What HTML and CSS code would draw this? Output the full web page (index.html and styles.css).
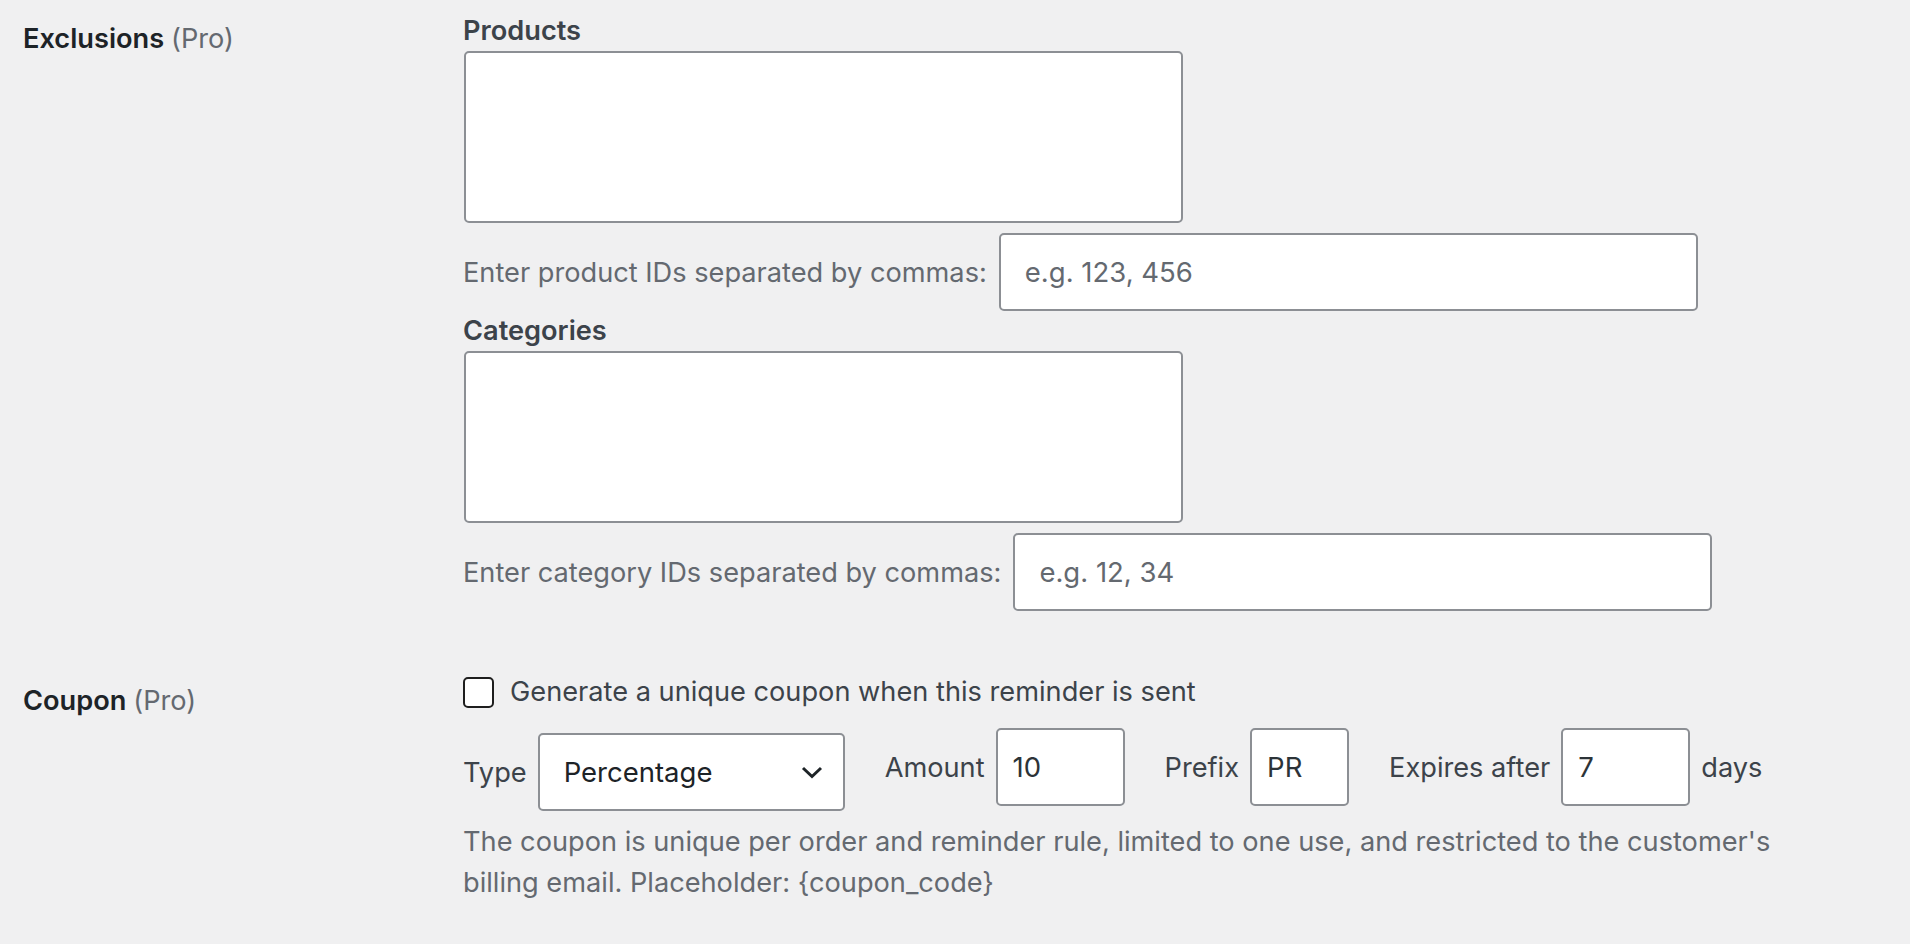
FILE: index.html
```html
<!DOCTYPE html>
<html lang="en">
<head>
    <meta charset="UTF-8">
    <meta name="viewport" content="width=device-width, initial-scale=1.0">
    <title>Reminder rule - Exclusions &amp; Coupon</title>
    <link rel="stylesheet" href="styles.css">
</head>
<body>
    <div class="form-table">
        <!-- Exclusions -->
        <div class="form-row row-exclusions">
            <div class="form-th">Exclusions <span class="pro">(Pro)</span></div>
            <div class="form-td">
                <div class="field-label">Products</div>
                <textarea class="picker"></textarea>
                <div class="id-row">
                    <span class="description">Enter product IDs separated by commas:</span>
                    <input type="text" class="ids-input" placeholder="e.g. 123, 456">
                </div>

                <div class="field-label label-categories">Categories</div>
                <textarea class="picker"></textarea>
                <div class="id-row">
                    <span class="description">Enter category IDs separated by commas:</span>
                    <input type="text" class="ids-input" placeholder="e.g. 12, 34">
                </div>
            </div>
        </div>

        <!-- Coupon -->
        <div class="form-row row-coupon">
            <div class="form-th th-coupon">Coupon <span class="pro">(Pro)</span></div>
            <div class="form-td">
                <label class="check-line">
                    <input type="checkbox" class="checkbox">
                    Generate a unique coupon when this reminder is sent
                </label>

                <div class="coupon-fields">
                    <label class="coupon-group">
                        Type
                        <span class="select-wrap">
                            <select class="coupon-select">
                                <option>Percentage</option>
                                <option>Fixed amount</option>
                            </select>
                            <svg class="chevron" width="22" height="13" viewBox="0 0 22 13">
                                <polyline points="2,2 11,10.5 20,2" fill="none" stroke="#1d2327" stroke-width="3"/>
                            </svg>
                        </span>
                    </label>
                    <label class="coupon-group">
                        Amount
                        <input type="text" class="small-input w-amount" value="10">
                    </label>
                    <label class="coupon-group">
                        Prefix
                        <input type="text" class="small-input w-prefix" value="PR">
                    </label>
                    <label class="coupon-group">
                        Expires after
                        <input type="text" class="small-input w-amount" value="7">
                        days
                    </label>
                </div>

                <p class="description coupon-note">The coupon is unique per order and reminder rule, limited to one use, and restricted to the customer's billing email. Placeholder: {coupon_code}</p>
            </div>
        </div>
    </div>
</body>
</html>
```

FILE: styles.css
```css
* {
    margin: 0;
    padding: 0;
    box-sizing: border-box;
}

body {
    background-color: #f0f0f1;
    font-family: Inter, "Noto Sans", sans-serif;
    font-size: 27.2px;
    color: #3c434a;
    min-height: 100vh;
}

/* Table layout */
.form-table {
    padding-left: 23px;
}

.form-row {
    display: flex;
}

.form-th {
    width: 440px;
    flex-shrink: 0;
    padding-top: 22px;
    line-height: 34px;
    font-weight: 600;
    color: #1d2327;
}

.form-th .pro {
    font-weight: 400;
    color: #646970;
}

.form-td {
    flex: 1;
    padding-top: 14px;
}

.row-coupon {
    margin-top: 64px;
}

.row-coupon .form-td {
    padding-top: 0;
}

.th-coupon {
    padding-top: 9px;
}

/* Exclusions */
.field-label {
    font-weight: 600;
    line-height: 34px;
    color: #3c434a;
}

.label-categories {
    margin-top: 3px;
}

.picker {
    display: block;
    width: 719px;
    height: 172px;
    margin-top: 3px;
    margin-left: 1px;
    background: white;
    border: 2px solid #8c8f94;
    border-radius: 5px;
    resize: none;
}

.id-row {
    display: flex;
    align-items: center;
    gap: 12px;
    margin-top: 10px;
}

.description {
    color: #646970;
}

.ids-input {
    width: 699px;
    height: 78px;
    padding: 0 24px;
    background: white;
    border: 2px solid #8c8f94;
    border-radius: 5px;
    font-family: Inter, "Noto Sans", sans-serif;
    font-size: 27.5px;
    color: #2c3338;
}

.ids-input::placeholder {
    color: #646970;
}

/* Coupon */
.check-line {
    display: flex;
    align-items: center;
    gap: 16px;
    line-height: 34px;
}

.checkbox {
    appearance: none;
    width: 31px;
    height: 31px;
    background: white;
    border: 2.5px solid #1e1e1e;
    border-radius: 5px;
}

.coupon-fields {
    display: flex;
    align-items: flex-start;
    gap: 40px;
    margin-top: 19px;
}

.coupon-group {
    display: flex;
    align-items: center;
    gap: 11px;
    height: 78px;
}

.coupon-group:first-child {
    gap: 11px;
    margin-top: 5px;
}

.select-wrap {
    position: relative;
    display: block;
}

.coupon-select {
    appearance: none;
    display: block;
    width: 307px;
    height: 78px;
    padding: 0 24px;
    background: white;
    border: 2px solid #8c8f94;
    border-radius: 5px;
    font-family: Inter, "Noto Sans", sans-serif;
    font-size: 27.5px;
    color: #1d2327;
}

.chevron {
    position: absolute;
    right: 22px;
    top: 33px;
}

.small-input {
    height: 78px;
    padding: 0 15px;
    background: white;
    border: 2px solid #8c8f94;
    border-radius: 5px;
    font-family: Inter, "Noto Sans", sans-serif;
    font-size: 27.5px;
    color: #2c3338;
}

.w-amount {
    width: 129px;
}

.w-prefix {
    width: 99px;
}

.coupon-note {
    max-width: 1340px;
    margin-top: 10px;
    line-height: 41px;
}
```
